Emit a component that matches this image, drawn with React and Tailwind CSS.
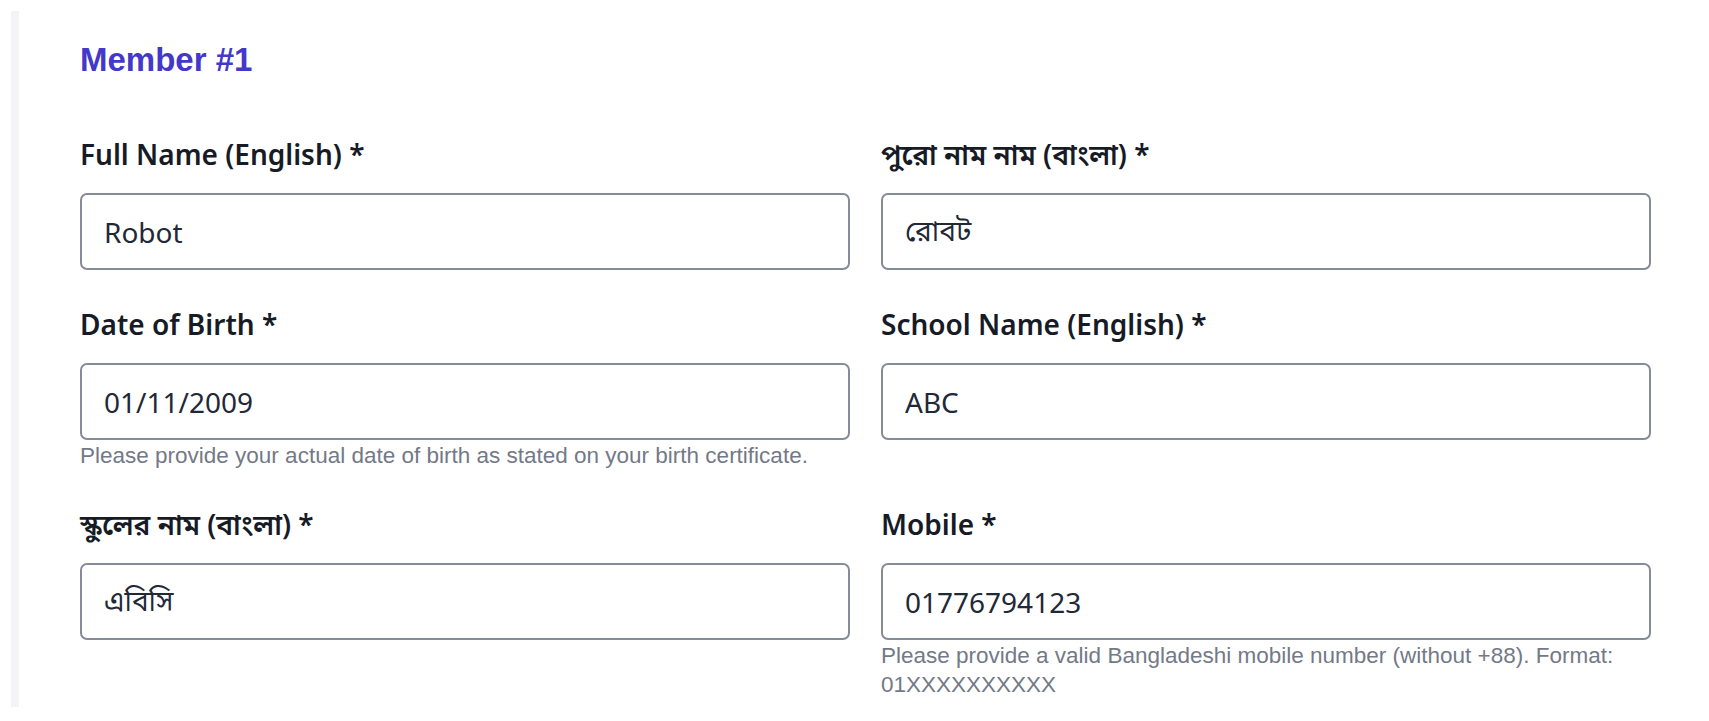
import React from "react";

const sans = { fontFamily: '"Noto Sans", "Open Sans", "Noto Sans Bengali", "Lohit Bengali", "FreeSans", sans-serif' };

function Field({ label, value, help }) {
  return (
    <div className="flex flex-col">
      <label
        className="block h-[40px] text-[28px] leading-[40px] font-semibold text-[#161b26] whitespace-nowrap"
        style={sans}
      >
        {label}
      </label>
      <input
        type="text"
        readOnly
        defaultValue={value}
        className="mt-[19px] h-[77px] w-full rounded-[7px] border-2 border-[#868b98] bg-white pl-[22px] pr-4 text-[28px] text-[#1f2937] outline-none"
        style={sans}
      />
      {help && (
        <p className="mt-[1px] text-[22.5px] leading-[29px] text-[#737987] [font-family:'Liberation_Sans',Arial,sans-serif]">
          {help}
        </p>
      )}
    </div>
  );
}

export default function App() {
  return (
    <div className="min-h-[721px] w-full bg-white pl-[11px] pt-[11px]">
      <div className="border-l-8 border-[#f3f4f6] pl-[61px] pr-[58px] pt-[29px] pb-[8px]">
        <h2 className="h-[40px] text-[33px] leading-[40px] font-bold text-[#4338ca] [font-family:'Liberation_Sans',Arial,sans-serif]">
          Member #1
        </h2>
        <div className="mt-[54px] grid grid-cols-2 gap-x-[31px] gap-y-[34px]">
          <Field label="Full Name (English) *" value="Robot" />
          <Field label="পুরো নাম নাম (বাংলা) *" value="রোবট" />
          <Field
            label="Date of Birth *"
            value="01/11/2009"
            help="Please provide your actual date of birth as stated on your birth certificate."
          />
          <Field label="School Name (English) *" value="ABC" />
          <Field label="স্কুলের নাম (বাংলা) *" value="এবিসি" />
          <Field
            label="Mobile *"
            value="01776794123"
            help="Please provide a valid Bangladeshi mobile number (without +88). Format: 01XXXXXXXXXX"
          />
        </div>
      </div>
    </div>
  );
}
